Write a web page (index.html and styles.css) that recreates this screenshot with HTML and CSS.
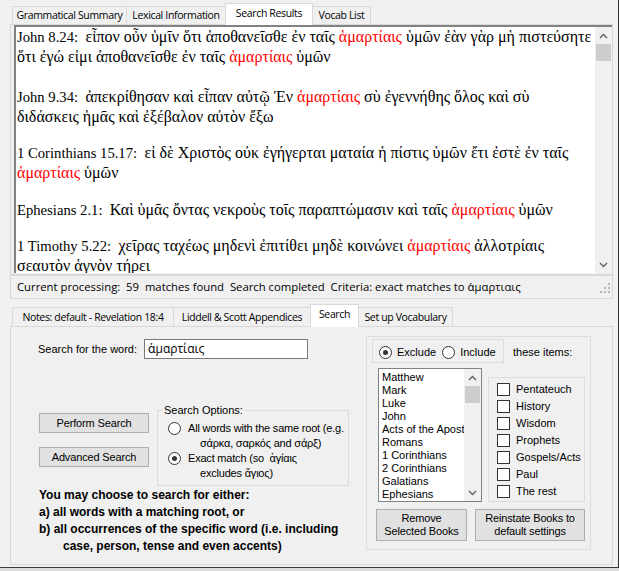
FILE: index.html
```html
<!DOCTYPE html>
<html lang="en">
<head>
<meta charset="utf-8">
<title>Search Results</title>
<link rel="stylesheet" href="styles.css">
</head>
<body>
<div class="desk">
  <div class="window">
    <section class="tabctl">
      <div class="tabstrip tabstrip-top">
        <div class="tab tab-gram">Grammatical Summary</div>
        <div class="tab tab-lex">Lexical Information</div>
        <div class="tab tab-res is-active">Search Results</div>
        <div class="tab tab-voc">Vocab List</div>
      </div>
      <div class="panel panel-results">
        <div class="rtb">
          <div class="rtb-text">
            <p class="verse v1"><span class="ref">John 8.24:&nbsp; </span>εἶπον οὖν ὑμῖν ὅτι ἀποθανεῖσθε ἐν ταῖς <span class="hit">ἁμαρτίαις</span> ὑμῶν ἐὰν γὰρ μὴ πιστεύσητε<br>ὅτι ἐγώ εἰμι ἀποθανεῖσθε ἐν ταῖς <span class="hit">ἁμαρτίαις</span> ὑμῶν</p>
            <p class="verse v2"><span class="ref">John 9.34:&nbsp; </span>ἀπεκρίθησαν καὶ εἶπαν αὐτῷ Ἐν <span class="hit">ἁμαρτίαις</span> σὺ ἐγεννήθης ὅλος καὶ σὺ<br>διδάσκεις ἡμᾶς καὶ ἐξέβαλον αὐτὸν ἔξω</p>
            <p class="verse v3"><span class="ref">1 Corinthians 15.17:&nbsp; </span>εἰ δὲ Χριστὸς οὐκ ἐγήγερται ματαία ἡ πίστις ὑμῶν ἔτι ἐστὲ ἐν ταῖς<br><span class="hit">ἁμαρτίαις</span> ὑμῶν</p>
            <p class="verse v4"><span class="ref">Ephesians 2.1:&nbsp; </span>Καὶ ὑμᾶς ὄντας νεκροὺς τοῖς παραπτώμασιν καὶ ταῖς <span class="hit">ἁμαρτίαις</span> ὑμῶν</p>
            <p class="verse v5"><span class="ref">1 Timothy 5.22:&nbsp; </span>χεῖρας ταχέως μηδενὶ ἐπιτίθει μηδὲ κοινώνει <span class="hit">ἁμαρτίαις</span> ἀλλοτρίαις<br>σεαυτὸν ἁγνὸν τήρει</p>
          </div>
          <div class="vscroll">
            <div class="sb-btn"><svg width="9" height="6" viewBox="0 0 9 6"><polyline points="1,5 4.5,1.5 8,5" fill="none" stroke="#606060" stroke-width="1.4"/></svg></div>
            <div class="sb-thumb"></div>
            <div class="sb-track"></div>
            <div class="sb-btn"><svg width="9" height="6" viewBox="0 0 9 6"><polyline points="1,1 4.5,4.5 8,1" fill="none" stroke="#606060" stroke-width="1.4"/></svg></div>
          </div>
        </div>
      </div>
    </section>

    <div class="statusbar">
      <span class="status-text">Current processing:  59  matches found  Search completed  Criteria: exact matches to ἁμαρτιαις</span>
      <svg class="grip" width="12" height="12" viewBox="0 0 12 12">
        <rect x="9" y="1" width="2" height="2" fill="#b4b4b4"/>
        <rect x="5" y="5" width="2" height="2" fill="#b4b4b4"/>
        <rect x="9" y="5" width="2" height="2" fill="#b4b4b4"/>
        <rect x="1" y="9" width="2" height="2" fill="#b4b4b4"/>
        <rect x="5" y="9" width="2" height="2" fill="#b4b4b4"/>
        <rect x="9" y="9" width="2" height="2" fill="#b4b4b4"/>
      </svg>
    </div>

    <section class="tabctl tabctl-lower">
      <div class="tabstrip tabstrip-lower">
        <div class="tab tab-notes">Notes: default - Revelation 18:4</div>
        <div class="tab tab-lsa">Liddell &amp; Scott Appendices</div>
        <div class="tab tab-search is-active">Search</div>
        <div class="tab tab-setup">Set up Vocabulary</div>
      </div>
      <div class="panel panel-search">
        <div class="search-left">
          <div class="word-row">
            <span class="word-label">Search for the word:</span>
            <div class="textbox">ἁμαρτίαις</div>
          </div>
          <div class="action-row">
            <div class="btn-col">
              <button class="btn btn-wide">Perform Search</button>
              <button class="btn btn-wide">Advanced Search</button>
            </div>
            <fieldset class="options">
              <legend>Search Options:</legend>
              <div class="opt">
                <span class="radio"></span>
                <div class="opt-text"><div>All words with the same root (e.g.</div><div class="cont">σάρκα, σαρκός and σάρξ)</div></div>
              </div>
              <div class="opt">
                <span class="radio is-on"></span>
                <div class="opt-text"><div>Exact match (so&nbsp; ἁγίαις</div><div class="cont">excludes ἅγιος)</div></div>
              </div>
            </fieldset>
          </div>
          <div class="help">
            <div>You may choose to search for either:</div>
            <div>a) all words with a matching root, or</div>
            <div>b) all occurrences of the specific word (i.e. including</div>
            <div class="help-cont">case, person, tense and even accents)</div>
          </div>
        </div>

        <div class="books">
          <div class="books-head">
            <div class="mode">
              <span class="radio is-on"></span><span class="mode-label">Exclude</span>
              <span class="radio"></span><span class="mode-label">Include</span>
            </div>
            <span class="items-label">these items:</span>
          </div>
          <div class="books-body">
            <div class="listbox">
              <ul class="list-items">
                <li>Matthew</li>
                <li>Mark</li>
                <li>Luke</li>
                <li>John</li>
                <li>Acts of the Apostles</li>
                <li>Romans</li>
                <li>1 Corinthians</li>
                <li>2 Corinthians</li>
                <li>Galatians</li>
                <li>Ephesians</li>
              </ul>
              <div class="vscroll">
                <div class="sb-btn"><svg width="9" height="6" viewBox="0 0 9 6"><polyline points="1,5 4.5,1.5 8,5" fill="none" stroke="#606060" stroke-width="1.4"/></svg></div>
                <div class="sb-thumb"></div>
                <div class="sb-track"></div>
                <div class="sb-btn"><svg width="9" height="6" viewBox="0 0 9 6"><polyline points="1,1 4.5,4.5 8,1" fill="none" stroke="#606060" stroke-width="1.4"/></svg></div>
              </div>
            </div>
            <div class="cats">
              <div class="cat"><span class="check"></span>Pentateuch</div>
              <div class="cat"><span class="check"></span>History</div>
              <div class="cat"><span class="check"></span>Wisdom</div>
              <div class="cat"><span class="check"></span>Prophets</div>
              <div class="cat"><span class="check"></span>Gospels/Acts</div>
              <div class="cat"><span class="check"></span>Paul</div>
              <div class="cat"><span class="check"></span>The rest</div>
            </div>
          </div>
          <div class="books-actions">
            <button class="btn btn-remove">Remove<br>Selected Books</button>
            <button class="btn btn-reinstate">Reinstate Books to<br>default settings</button>
          </div>
        </div>
      </div>
    </section>
  </div>
  <div class="frame-edge"></div>
</div>
<div class="behind"></div>
</body>
</html>
```

FILE: styles.css
```css
* { box-sizing: border-box; }
html, body { margin: 0; padding: 0; }
body {
  width: 619px;
  height: 571px;
  overflow: hidden;
  background: #f0f0f0;
  color: #000;
  font: 11px/13px "Liberation Sans", Arial, "DejaVu Sans", sans-serif;
}

.desk { display: flex; height: 567px; }
.window { width: 618px; height: 567px; padding: 3px 0 0 10px; }
.frame-edge { width: 1px; background: #2d2d2d; }
.behind { height: 4px; border-top: 1px solid #3a3a3a; background: #dcdcdc; }

/* ---------- tab controls ---------- */
.tabctl { width: 603px; }
.tabctl-lower { margin-top: 5px; }

.tabstrip {
  display: flex;
  align-items: flex-end;
  padding-left: 2px;
  font-family: "Open Sans", "Noto Sans", sans-serif;
  font-size: 10.5px;
  letter-spacing: -0.35px;
}
.tabstrip-top { height: 21px; }
.tabstrip-lower { height: 22px; }

.tab {
  height: 18px;
  line-height: 17px;
  border: 1px solid #d9d9d9;
  border-bottom: 0;
  background: #f0f0f0;
  text-align: center;
  white-space: nowrap;
  margin-right: -1px;
}
.tab.is-active {
  height: 22px;
  line-height: 18px;
  padding-bottom: 3px;
  margin-bottom: -1px;
  background: #fff;
  position: relative;
  z-index: 1;
}
.tabstrip-lower .tab { height: 19px; line-height: 18px; }
.tabstrip-lower .tab.is-active { height: 23px; line-height: 19px; }

.tab-gram { width: 115px; }
.tab-lex { width: 100px; }
.tab-res { width: 88px; }
.tab-voc { width: 59px; }
.tab-notes { width: 162px; }
.tab-lsa { width: 138px; }
.tab-search { width: 49px; }
.tab-setup { width: 95px; }

.panel { border: 1px solid #d9d9d9; background: #f0f0f0; }

/* ---------- results rich text ---------- */
.panel-results { height: 251px; padding: 0 0 1px 3px; }
.rtb {
  display: flex;
  height: 100%;
  background: #fff;
  border-top: 2px solid #828282;
  border-left: 2px solid #828282;
}
.rtb-text {
  flex: 1;
  overflow: hidden;
  padding-left: 1px;
  font-family: "Liberation Serif", "Times New Roman", "DejaVu Serif", serif;
  font-size: 16px;
  line-height: 20px;
  white-space: nowrap;
}
.ref { font-size: 14.67px; }
.verse { margin: 0 0 16px; }
.v1 { margin-bottom: 20px; }
.v3 { margin-bottom: 17px; }
.hit { color: #f00; }

.vscroll {
  width: 17px;
  flex: none;
  display: flex;
  flex-direction: column;
  background: #f0f0f0;
}
.sb-btn { height: 17px; display: flex; align-items: center; justify-content: center; }
.sb-thumb { height: 17px; margin: 0 1px; background: #cdcdcd; }
.sb-track { flex: 1; }

/* ---------- status bar ---------- */
.statusbar {
  width: 603px;
  height: 24px;
  border: 1px solid #d9d9d9;
  display: flex;
  justify-content: space-between;
  padding-left: 6px;
  font: 11.3px/22px "Open Sans", "Noto Sans", sans-serif;
  white-space: pre;
}
.grip { margin: 6px 1px 0 0; }

/* ---------- search panel ---------- */
.panel-search { height: 239px; display: flex; padding-left: 27px; }
.search-left { width: 328px; padding-top: 12px; }

.word-row { display: flex; align-items: center; height: 20px; }
.word-label { width: 106px; }
.textbox {
  width: 164px;
  height: 20px;
  border: 1px solid #7a7a7a;
  background: #fff;
  padding-left: 3px;
  font: 12px/18px "Open Sans", "Noto Sans", sans-serif;
}

.action-row { display: flex; margin-top: 44px; align-items: flex-start; }
.btn-col { display: flex; flex-direction: column; gap: 14px; margin: 10px 0 0 1px; width: 110px; }

.btn {
  border: 1px solid #adadad;
  background: #e1e1e1;
  color: #000;
  font: 11px/13px "Liberation Sans", Arial, sans-serif;
  letter-spacing: -0.15px;
  text-align: center;
  padding: 0;
  margin: 0;
}
.btn-wide { width: 110px; height: 20px; }

.options {
  margin: 0 0 0 8px;
  width: 192px;
  min-width: 0;
  border: 1px solid #dcdcdc;
  padding: 4px 0 4px 4px;
}
.options legend { padding: 0 2px; line-height: 14px; }
.opt { display: flex; line-height: 15px; margin-left: 6px; white-space: nowrap; letter-spacing: -0.2px; }
.opt-text { margin-left: 7px; }
.cont { padding-left: 12px; }

.radio {
  width: 13px;
  height: 13px;
  flex: none;
  border: 1px solid #333;
  border-radius: 50%;
  background: #fff;
  display: flex;
  align-items: center;
  justify-content: center;
  margin-top: 1px;
}
.radio.is-on::after {
  content: "";
  width: 5px;
  height: 5px;
  border-radius: 50%;
  background: #333;
}

.help { font-weight: bold; font-size: 12px; line-height: 17px; margin: 1px 0 0 1px; white-space: nowrap; }
.help-cont { padding-left: 24px; }

/* ---------- book filter group ---------- */
.books {
  width: 225px;
  height: 214px;
  margin-top: 9px;
  border: 1px solid #dcdcdc;
  padding: 2px 0 0 5px;
}
.books-head { display: flex; align-items: center; }
.mode {
  width: 132px;
  height: 24px;
  border: 1px solid #dcdcdc;
  display: flex;
  align-items: center;
  padding: 2px 0 0 6px;
}
.mode .radio { margin-top: 0; }
.mode-label { margin-left: 5px; margin-right: 6px; }
.items-label { margin-left: 9px; padding-top: 2px; }

.books-body { display: flex; align-items: flex-start; margin-top: 5px; }
.listbox {
  width: 104px;
  height: 134px;
  margin-left: 6px;
  border: 1px solid #828282;
  background: #fff;
  display: flex;
}
.list-items {
  flex: 1;
  margin: 0;
  padding: 2px 0 0 3px;
  list-style: none;
  overflow: hidden;
  white-space: nowrap;
  line-height: 13px;
}

.cats {
  width: 97px;
  height: 125px;
  margin: 9px 0 0 6px;
  border: 1px solid #dcdcdc;
  padding: 3px 0 0 8px;
}
.cat { display: flex; align-items: center; height: 17px; white-space: nowrap; }
.check { width: 13px; height: 13px; flex: none; border: 1px solid #333; background: #fff; margin-right: 6px; }

.books-actions { display: flex; gap: 8px; margin: 7px 0 0 4px; }
.btn-remove { width: 91px; height: 32px; }
.btn-reinstate { width: 110px; height: 32px; }
```
